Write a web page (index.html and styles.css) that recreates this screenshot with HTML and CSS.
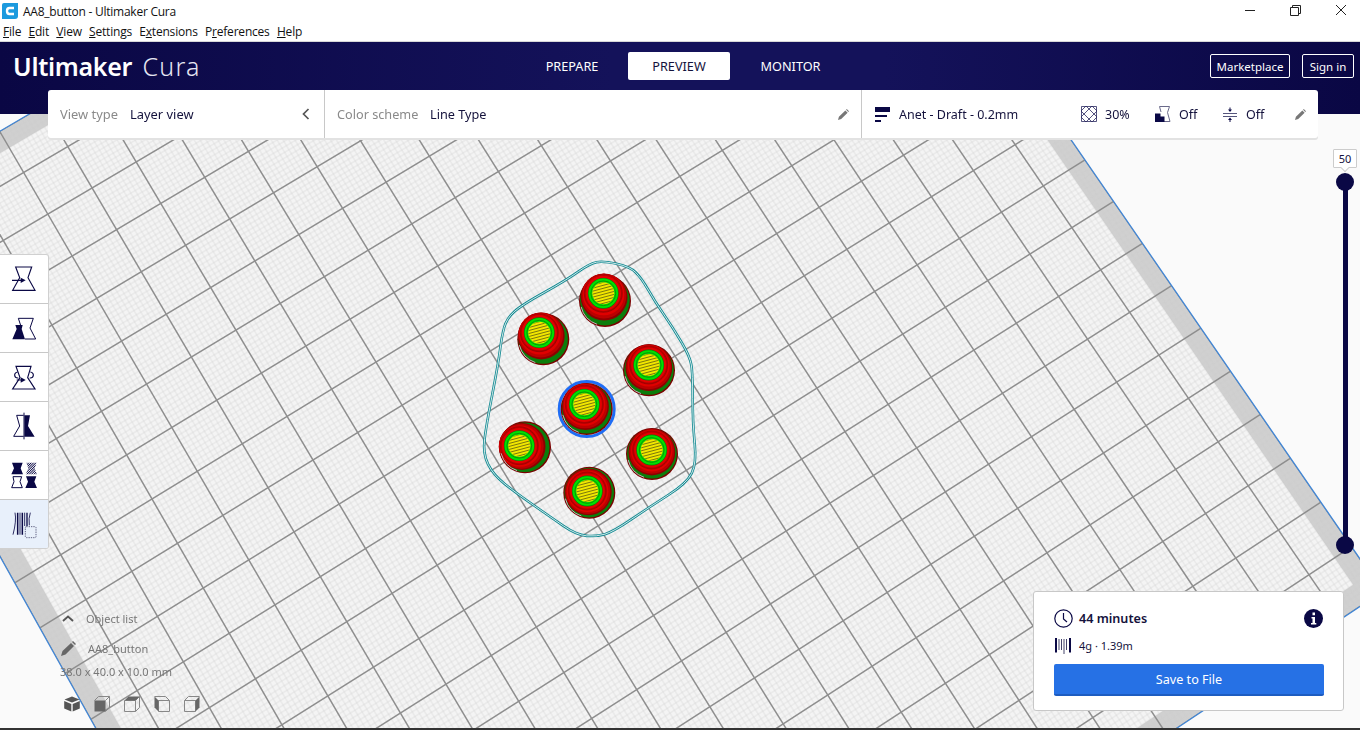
FILE: index.html
```html
<!DOCTYPE html>
<html lang="en">
<head>
<meta charset="utf-8">
<title>AA8_button - Ultimaker Cura</title>
<link rel="stylesheet" href="styles.css">
</head>
<body>
<div class="titlebar">
  <svg class="app-icon" viewBox="0 0 16 16"><path d="M2 0H16V13Q16 16 13 16H0V2Q0 0 2 0Z" fill="#1c9ade"/><path d="M12 5H7.5Q5 5 5 8Q5 11 7.5 11H12" fill="none" stroke="#fff" stroke-width="2.4"/></svg>
  <span class="window-title">AA8_button - Ultimaker Cura</span>
  <div class="window-controls">
    <svg class="win-min" viewBox="0 0 10 1"><rect width="10" height="1" fill="#222"/></svg>
    <svg class="win-restore" viewBox="0 0 11 11"><path d="M2.5 2.5V.5H10.5V8.5H8.5M.5 2.5H8.5V10.5H.5Z" fill="none" stroke="#222"/></svg>
    <svg class="win-close" viewBox="0 0 10 10"><path d="M0 0L10 10M10 0L0 10" stroke="#222" stroke-width="1"/></svg>
  </div>
</div>
<nav class="menubar">
  <span><u>F</u>ile</span><span><u>E</u>dit</span><span><u>V</u>iew</span><span><u>S</u>ettings</span><span>E<u>x</u>tensions</span><span>P<u>r</u>eferences</span><span><u>H</u>elp</span>
</nav>
<div class="app">
  <header class="header">
    <div class="logo"><b>Ultimaker</b> <i>Cura</i></div>
    <div class="tabs"><span class="tab">PREPARE</span><span class="tab tab-active">PREVIEW</span><span class="tab">MONITOR</span></div>
    <div class="account"><span class="outline-btn market">Marketplace</span><span class="outline-btn signin">Sign in</span></div>
  </header>
  <main class="viewport"><canvas id="plate" width="1360" height="614"></canvas></main>

  <section class="topbar">
    <div class="seg seg-view">
      <span class="muted lbl-view">View type</span><span class="val">Layer view</span>
      <svg class="chev" viewBox="0 0 8 12"><path d="M6.5 1L1.5 6L6.5 11" fill="none" stroke="#555" stroke-width="1.7"/></svg>
    </div>
    <div class="seg seg-color">
      <span class="muted lbl-color">Color scheme</span><span class="val">Line Type</span>
      <svg class="pencil" viewBox="0 0 12 12"><path d="M0 12L1 8.5L8 1.5L10.5 4L3.5 11ZM8.8.8L9.6 0L12 2.4L11.2 3.2Z" fill="#777"/></svg>
    </div>
    <div class="seg seg-profile">
      <svg class="ic-profile" viewBox="0 0 15 15"><path d="M0 0H15V5H0ZM0 8H12V10H0ZM0 13H6V15H0Z" fill="#0a0845"/></svg>
      <span class="val profile-name">Anet - Draft - 0.2mm</span>
      <svg class="ic-infill" viewBox="0 0 16 16"><path d="M.5.5H15.5V15.5H.5ZM0 5L5 0M0 11L11 0M5 16L16 5M11 16L16 11M0 5L11 16M0 11L5 16M5 0L16 11M11 0L16 5" fill="none" stroke="#2a2860" stroke-width=".8"/></svg>
      <span class="val pct">30%</span>
      <svg class="ic-support" viewBox="0 0 16 16"><path d="M4.5.5H14.5L12.5 6.5L15 15.5H9" fill="none" stroke="#6a6a8a" stroke-width="1"/><path d="M4.5.5L6 6" stroke="#6a6a8a" stroke-width="1"/><path d="M0 7.5H5.5V10.5H9.5V16H0Z" fill="#0a0845"/></svg>
      <span class="val off1">Off</span>
      <svg class="ic-adhesion" viewBox="0 0 14 15"><path d="M0 6.5H14M0 9.5H14" stroke="#55557c" stroke-width="1" fill="none"/><path d="M7 .5V4M7 12V15" stroke="#0a0845" stroke-width="1"/><path d="M5 2.5H9L7 5ZM5 13H9L7 10.5Z" fill="#0a0845"/></svg>
      <span class="val off2">Off</span>
      <svg class="pencil pencil-r" viewBox="0 0 12 12"><path d="M0 12L1 8.5L8 1.5L10.5 4L3.5 11ZM8.8.8L9.6 0L12 2.4L11.2 3.2Z" fill="#777"/></svg>
    </div>
  </section>

  <aside class="tools">
    <div class="tool"><svg viewBox="0 0 144 147"><g fill="none" stroke="#0a0845" stroke-width="3.5"><path d="M47 36H95L84 68L105 106H38L59 68Z"/><path d="M36 76H64"/></g><path d="M62 68L77 76L62 84Z" fill="#0a0845"/></svg></div>
    <div class="tool"><svg viewBox="0 0 144 147"><path d="M55 43H100L90 72L107 105H75" fill="none" stroke="#0a0845" stroke-width="3"/><path d="M55 43L62 64" stroke="#0a0845" stroke-width="3"/><path d="M46 63H68L65 75L75 106H37L50 75Z" fill="#0a0845"/></svg></div>
    <div class="tool"><svg viewBox="0 0 144 147"><g fill="none" stroke="#0a0845" stroke-width="3.5"><path d="M48 40H93L83 74L105 108H38L60 74Z"/><path d="M53 57A10 9 0 1 0 55 75M91 57A10 9 0 1 1 89 75M50 81H66"/></g><path d="M62 73L77 81L62 89Z" fill="#0a0845"/></svg></div>
    <div class="tool"><svg viewBox="0 0 144 147"><path d="M71 40H50L59 72L41 103H71" fill="none" stroke="#0a0845" stroke-width="3"/><path d="M73 40H90L84 72L104 104H73Z" fill="#0a0845"/><path d="M72 32V112" stroke="#0a0845" stroke-width="3"/></svg></div>
    <div class="tool"><svg viewBox="0 0 144 147"><defs><pattern id="hatch" width="5" height="5" patternUnits="userSpaceOnUse" patternTransform="rotate(45)"><rect width="2.5" height="5" fill="#0a0845"/></pattern></defs><path d="M36 35H68L62 52L69 70H34L42 52Z" fill="#0a0845"/><path d="M79 35H110L104 52L111 70H77L85 52Z" fill="url(#hatch)"/><path d="M39 77H65L60 92L67 110H35L42 92Z" fill="none" stroke="#0a0845" stroke-width="3"/><path d="M78 76H109L103 92L111 111H76L84 92Z" fill="#0a0845"/></svg></div>
    <div class="tool tool-active"><svg viewBox="0 0 144 147"><g stroke="#0a0845" fill="none"><path d="M45 38Q50 62 39 104" stroke-width="2.5"/><path d="M53 38V104" stroke-width="4.5"/><path d="M60 38V104" stroke-width="2.5"/><path d="M67 38V104" stroke-width="4.5"/><path d="M74 38V78" stroke-width="2.5"/><path d="M81 38V78" stroke-width="4"/><path d="M91 38Q85 55 88 76" stroke-width="2.5"/></g><rect x="76" y="80" width="32" height="33" rx="3" fill="#e8f0fb" stroke="#44446a" stroke-width="2.5" stroke-dasharray="4 3"/></svg></div>
  </aside>

  <div class="slider">
    <span class="slider-label">50</span>
    <div class="slider-track"><span class="knob knob-top"></span><span class="knob knob-bottom"></span></div>
  </div>

  <section class="objects">
    <div class="obj-row obj-head"><svg class="obj-chev" viewBox="0 0 12 7"><path d="M1 6L6 1.5L11 6" fill="none" stroke="#555" stroke-width="1.8"/></svg><span>Object list</span></div>
    <div class="obj-row obj-name"><svg class="obj-pencil" viewBox="0 0 15 15"><path d="M0 15L1.5 10L10 2L13 5L4.5 13.5ZM11 1L12 0L15 3L14 4Z" fill="#666"/></svg><span>AA8_button</span></div>
    <div class="obj-dim">38.0 x 40.0 x 10.0 mm</div>
    <div class="cubes">
      <svg viewBox="0 0 16 16"><path d="M8 .5L15.5 3.5L8 6.5L.5 3.5ZM.2 5L7.3 8V15.5L.2 12.5ZM15.8 5V12.5L8.7 15.5V8Z" fill="#555"/></svg>
      <svg viewBox="0 0 16 16"><path d="M.5 4.5L4.5.5H15.5V11.5L11.5 15.5M11.5 4.5L15.5.5" fill="none" stroke="#888"/><path d="M.5 4.5H11.5V15.5H.5Z" fill="#666"/></svg>
      <svg viewBox="0 0 16 16"><path d="M.5 4.5H11.5V15.5H.5ZM11.5 4.5L15.5.5V11.5L11.5 15.5" fill="none" stroke="#888"/><path d="M.5 4.5L4.5.5H15.5L11.5 4.5Z" fill="#666"/></svg>
      <svg viewBox="0 0 16 16"><path d="M4.5 4.5H15.5V15.5H4.5ZM.5.5H11.5L15.5 4.5" fill="none" stroke="#888"/><path d="M.5.5L4.5 4.5V15.5L.5 11.5Z" fill="#666"/></svg>
      <svg viewBox="0 0 16 16"><path d="M.5 4.5H11.5V15.5H.5ZM.5 4.5L4.5.5H15.5" fill="none" stroke="#888"/><path d="M11.5 4.5L15.5.5V11.5L11.5 15.5Z" fill="#666"/></svg>
    </div>
  </section>

  <section class="output">
    <div class="out-row out-time">
      <svg class="ic-clock" viewBox="0 0 19 19"><circle cx="9.5" cy="9.5" r="8.7" fill="none" stroke="#0a0845" stroke-width="1.2"/><path d="M9.5 4V10L13 13" fill="none" stroke="#0a0845" stroke-width="1.2"/></svg>
      <strong>44 minutes</strong>
      <svg class="ic-info" viewBox="0 0 19 19"><circle cx="9.5" cy="9.5" r="9.5" fill="#0a0845"/><path d="M7.5 8H11V14H12.3V15.5H7V14H8.5V9.5H7.5ZM8.5 3.5H11V6.3H8.5Z" fill="#fff"/></svg>
    </div>
    <div class="out-row out-mat">
      <svg class="ic-mat" viewBox="0 0 16 17"><path d="M1 1V15.5M15 1V15.5" stroke="#0a0845" stroke-width="2"/><path d="M4 2V13M6.5 2V13M9 2V17M11.5 2V13" stroke="#44446a" stroke-width="1"/></svg>
      <span>4g · 1.39m</span>
    </div>
    <button class="save">Save to File</button>
  </section>
</div>
<div class="statusline"></div>
<script src="plate.js"></script>
</body>
</html>
```
FILE: styles.css
```css
* { box-sizing: border-box; }
html, body { margin: 0; height: 730px; overflow: hidden; background: #fff; }
body { font-family: "Noto Sans", "Open Sans", sans-serif; color: #14123c; width: 1360px; position: relative; }

.titlebar { height: 21px; display: flex; align-items: center; padding-left: 2px; font-family: "Open Sans", sans-serif; font-size: 12px; color: #111; position: relative; }
.app-icon { width: 16px; height: 16px; margin-right: 5px; }
.window-title { letter-spacing: -.25px; position: relative; top: 1px; }
.window-controls { position: absolute; top: 0; left: 0; }
.window-controls svg { position: absolute; }
.win-min { left: 1245px; top: 10px; width: 10px; height: 1px; }
.win-restore { left: 1290px; top: 5px; width: 11px; height: 11px; }
.win-close { left: 1336px; top: 5px; width: 10px; height: 10px; }

.menubar { height: 21px; display: flex; gap: 7.3px; padding: 1px 0 0 3px; align-items: center; font-family: "Open Sans", sans-serif; font-size: 12px; color: #111; border-bottom: 1px solid #d8d8d8; letter-spacing: -.2px; }

.app { position: relative; height: 686px; }
.header { height: 72px; background: linear-gradient(90deg, #0a0744 0%, #14125a 45%, #14125a 65%, #0a0744 100%); display: flex; color: #fff; position: relative; }
.logo { position: absolute; left: 13px; top: 6px; font-size: 25px; line-height: 36px; white-space: nowrap; }
.logo b { font-weight: 600; letter-spacing: -.3px; }
.logo i { font-style: normal; font-weight: 300; margin-left: 4px; color: #e6e6f2; letter-spacing: 1.2px; }
.tabs { position: absolute; left: 516px; top: 10px; display: flex; }
.tab { width: 112px; height: 28px; display: flex; align-items: center; justify-content: center; font-size: 12.7px; }
.tab-active { width: 102px; background: #fff; color: #14123c; border-radius: 2px; }
.tab:last-child { width: 121px; }
.account { position: absolute; left: 1210px; top: 12px; display: flex; gap: 12px; }
.outline-btn { height: 24px; border: 1px solid #fff; border-radius: 2px; display: flex; align-items: center; justify-content: center; font-size: 11.5px; }
.market { width: 80px; }
.signin { width: 52px; }

.viewport { height: 614px; background: #fafafa; overflow: hidden; }
#plate { display: block; }

.topbar { position: absolute; left: 48px; top: 48px; width: 1270px; height: 48px; background: #fff; border-radius: 3px; display: flex; box-shadow: 0 2px 0 #e2e2e2; font-size: 12.5px; }
.seg { height: 48px; display: flex; align-items: center; position: relative; }
.seg-view { width: 277px; padding-left: 12px; border-right: 1px solid #c8c8c8; font-size: 12.9px; }
.seg-color { width: 537px; padding-left: 12px; border-right: 1px solid #c8c8c8; font-size: 12.7px; }
.seg-profile { flex: 1; padding-left: 13px; }
.muted { color: #8a8a8a; }
.lbl-view { width: 70px; }
.lbl-color { width: 93px; }
.val { color: #14123c; white-space: nowrap; }
.chev { position: absolute; left: 254px; top: 18px; width: 8px; height: 12px; }
.pencil { position: absolute; left: 513px; top: 19px; width: 11px; height: 11px; }
.pencil-r { left: 433px; }
.ic-profile { width: 15px; height: 15px; margin-right: 9px; }
.profile-name { width: 182px; }
.ic-infill { width: 16px; height: 16px; margin-right: 8px; }
.pct { width: 50px; }
.ic-support { width: 16px; height: 16px; margin-right: 8px; }
.off1 { width: 44px; }
.ic-adhesion { width: 14px; height: 15px; margin-right: 9px; }

.tools { position: absolute; left: 0; top: 212px; width: 49px; background: #fff; border: 1px solid #d0d0d0; border-left: 0; border-radius: 0 3px 3px 0; overflow: hidden; }
.tool { height: 49px; border-bottom: 1px solid #c8c8c8; }
.tool:last-child { height: 48px; border-bottom: 0; }
.tool svg { display: block; width: 48px; height: 49px; }
.tool-active { background: #e8f0fb; }

.slider { position: absolute; left: 1332px; top: 107px; width: 26px; display: flex; flex-direction: column; align-items: center; }
.slider-label { width: 24px; height: 19px; background: #fff; border: 1px solid #ccc; font-size: 11px; line-height: 17px; text-align: center; position: relative; border-radius: 1px; }
.slider-label::after { content: ""; position: absolute; left: 8px; top: 15px; width: 5px; height: 5px; background: #fff; border-right: 1px solid #ccc; border-bottom: 1px solid #ccc; transform: rotate(45deg); }
.slider-track { width: 5px; height: 363px; margin-top: 14px; background: #0a0845; position: relative; }
.knob { position: absolute; left: -6.5px; width: 18px; height: 18px; border-radius: 50%; background: #0a0845; }
.knob-top { top: -9px; }
.knob-bottom { bottom: -9px; }

.objects { position: absolute; left: 60px; top: 568px; width: 160px; color: #777; font-size: 11px; }
.obj-row { display: flex; align-items: center; height: 18px; }
.obj-chev { width: 12px; height: 7px; margin: 0 12px 0 2px; }
.obj-head { margin-top: -1px; }
.obj-name { margin-top: 12px; }
.obj-pencil { width: 15px; height: 15px; margin-right: 12px; margin-left: 1px; }
.obj-dim { margin-top: 7px; line-height: 16px; }
.cubes { display: flex; gap: 14px; margin-top: 16px; margin-left: 4px; }
.cubes svg { width: 16px; height: 16px; }

.output { position: absolute; left: 1033px; top: 549px; width: 311px; height: 120px; background: #fff; border: 1px solid #c8c8c8; border-radius: 3px; padding: 15px 20px 0; }
.out-row { display: flex; align-items: center; }
.out-time { height: 22px; }
.ic-clock { width: 19px; height: 19px; margin-right: 6px; }
.out-time strong { font-size: 12.6px; font-weight: 600; flex: 1; }
.ic-info { width: 19px; height: 19px; }
.out-mat { margin-top: 7px; height: 18px; font-size: 11px; }
.ic-mat { width: 16px; height: 17px; margin: 0 8px 0 1px; }
.save { display: block; width: 270px; height: 32px; margin-top: 10px; border: 0; border-bottom: 2px solid #1d5cc0; border-radius: 2px; background: #2671e5; color: #fff; font: 12.6px "Noto Sans", sans-serif; padding: 0; }

.statusline { height: 2px; background: #333; position: absolute; left: 0; right: 0; top: 728px; }
```
FILE: plate.js
```js
// Perspective build plate and layer-view prints, drawn on a canvas.
var OFFSET_Y = 114; // canvas starts below the header
var ctx = document.getElementById('plate').getContext('2d');
ctx.translate(0, -OFFSET_Y);

// Grid crossings [i, j, x, y]: lattice cell index -> screen position
var crossings = [
  [0,0,68.3,146.7],[-1,0,23.3,171.7],[0,1,91.7,188.3],[1,1,136.7,161.7],[-1,1,47.7,214.3],[0,2,116.7,230],[1,2,161,204.3],
  [-4,8,85,601.7],[-3,9,158.3,616.7],[-3,10,183.3,661.7],[-2,10,230,633.3],[-4,10,136.7,690],[-3,11,210,706.7],
  [12,17,1047.3,552.3],[13,17,1090,525],[13,18,1120,568.3],[14,18,1163.3,541.7],[14,19,1193.3,588.3],[15,19,1235,557.3],[16,19,1278.3,530.7],
  [13,9,862,181],[14,9,904.4,155],[15,10,974,171.7],[16,10,1014.6,145],
  [7,9,605,338.3],[8,9,645,311.7],[6,7,508.3,281.7],[7,7,550,255]
];

function solve(A, b) {
  var n = b.length, r, c, k;
  for (c = 0; c < n; c++) {
    var piv = c;
    for (r = c + 1; r < n; r++) if (Math.abs(A[r][c]) > Math.abs(A[piv][c])) piv = r;
    var t = A[c]; A[c] = A[piv]; A[piv] = t; t = b[c]; b[c] = b[piv]; b[piv] = t;
    for (r = c + 1; r < n; r++) {
      var f = A[r][c] / A[c][c];
      for (k = c; k < n; k++) A[r][k] -= f * A[c][k];
      b[r] -= f * b[c];
    }
  }
  var x = new Array(n);
  for (r = n - 1; r >= 0; r--) {
    var s = b[r];
    for (k = r + 1; k < n; k++) s -= A[r][k] * x[k];
    x[r] = s / A[r][r];
  }
  return x;
}
function fitHomography(pts) {
  var N = [], v = [], a, b;
  for (a = 0; a < 8; a++) { N.push([0,0,0,0,0,0,0,0]); v.push(0); }
  function add(row, rhs) {
    for (a = 0; a < 8; a++) { v[a] += row[a] * rhs; for (b = 0; b < 8; b++) N[a][b] += row[a] * row[b]; }
  }
  pts.forEach(function (p) {
    var u = p[0] / 10, w = p[1] / 10, x = p[2] / 500, y = p[3] / 500;
    add([u, w, 1, 0, 0, 0, -u * x, -w * x], x);
    add([0, 0, 0, u, w, 1, -u * y, -w * y], y);
  });
  var h = solve(N, v);
  return function (i, j) {
    var u = i / 10, w = j / 10, d = h[6] * u + h[7] * w + 1;
    return [500 * (h[0] * u + h[1] * w + h[2]) / d, 500 * (h[3] * u + h[4] * w + h[5]) / d];
  };
}
var P = fitHomography(crossings);

var I0 = -5, I1 = 17, J0 = -1, J1 = 21, BAND = 0.4;

function line(a, b) { ctx.beginPath(); ctx.moveTo(a[0], a[1]); ctx.lineTo(b[0], b[1]); ctx.stroke(); }
function rectPath(i0, j0, i1, j1, reverse) {
  var c = [P(i0, j0), P(i1, j0), P(i1, j1), P(i0, j1)];
  if (reverse) c.reverse();
  c.forEach(function (p, k) { k ? ctx.lineTo(p[0], p[1]) : ctx.moveTo(p[0], p[1]); });
  ctx.closePath();
}

ctx.fillStyle = '#fafafa';
ctx.fillRect(0, 0, 1360, 800);

// plate
ctx.beginPath(); rectPath(I0, J0, I1, J1);
ctx.fillStyle = '#f4f4f4'; ctx.fill();
ctx.save(); ctx.clip();
// border band (no-go zone)
ctx.beginPath(); rectPath(I0, J0, I1, J1); rectPath(I0 + BAND, J0 + BAND, I1 - BAND, J1 - BAND, true);
ctx.fillStyle = '#d0d0d0'; ctx.fill();
// minor grid, 1/10 of a cell
ctx.strokeStyle = 'rgba(205,205,205,.24)'; ctx.lineWidth = 1.6;
var n;
for (n = I0 * 10; n <= I1 * 10; n++) if (n % 10) line(P(n / 10, J0), P(n / 10, J1));
for (n = J0 * 10; n <= J1 * 10; n++) if (n % 10) line(P(I0, n / 10), P(I1, n / 10));
// major grid
ctx.strokeStyle = '#8e8e8e'; ctx.lineWidth = 1.5;
for (n = I0; n <= I1; n++) line(P(n, J0), P(n, J1));
for (n = J0; n <= J1; n++) line(P(I0, n), P(I1, n));
ctx.restore();
// plate edge
ctx.beginPath(); rectPath(I0, J0, I1, J1);
ctx.strokeStyle = '#3f86d8'; ctx.lineWidth = 1.2; ctx.stroke();

// skirt outline, traced from the preview
var skirt = [[400,33],[480,50],[515,85],[555,155],[610,235],[660,320],[668,370],[668,520],[680,640],[650,700],[540,770],[430,845],[380,860],[320,855],[240,800],[140,730],[70,675],[38,610],[50,520],[85,340],[95,260],[110,205],[155,165],[290,90],[360,40]]
  .map(function (p) { return [p[0] / 3 + 470, p[1] / 3 + 250]; });
function skirtPath() {
  ctx.beginPath();
  var n = skirt.length;
  var s = [(skirt[n-1][0] + skirt[0][0]) / 2, (skirt[n-1][1] + skirt[0][1]) / 2];
  ctx.moveTo(s[0], s[1]);
  for (var i = 0; i < n; i++) {
    var a = skirt[i], b = skirt[(i + 1) % n];
    ctx.quadraticCurveTo(a[0], a[1], (a[0] + b[0]) / 2, (a[1] + b[1]) / 2);
  }
  ctx.closePath();
}
skirtPath(); ctx.strokeStyle = '#138a92'; ctx.lineWidth = 2.6; ctx.stroke();
skirtPath(); ctx.strokeStyle = '#e8f4f4'; ctx.lineWidth = .9; ctx.stroke();

// prints: top = position of top layer, base = base of the print
var prints = [
  { top: [603.3, 293.3], base: [605, 301] },
  { top: [539.3, 332.7], base: [543.3, 339.3] },
  { top: [648.7, 365], base: [649, 370.3] },
  { top: [584.3, 404.3], base: [586.7, 409], selected: true },
  { top: [519.3, 445.7], base: [525, 447.3] },
  { top: [651.7, 450], base: [652, 454] },
  { top: [587.3, 491], base: [589.3, 492.7] }
];
var layers = [
  [26, 0, '#7a0000'], [24.8, .05, '#0b7d0b'], [23.4, .5, '#8e0000'], [22.4, .65, '#bc0000'],
  [20.8, .85, '#e00000'], [18.6, .96, '#b40000'], [17.6, 1, '#e40000']
];
function disc(c, r, col) { ctx.beginPath(); ctx.arc(c[0], c[1], r, 0, Math.PI * 2); ctx.fillStyle = col; ctx.fill(); }
function ring(c, r, col, w) { ctx.beginPath(); ctx.arc(c[0], c[1], r, 0, Math.PI * 2); ctx.strokeStyle = col; ctx.lineWidth = w; ctx.stroke(); }

prints.forEach(function (m) {
  if (m.selected) ring(m.base, 27.5, '#1f6df5', 3);
  layers.forEach(function (l) {
    var t = l[1];
    disc([m.base[0] + (m.top[0] - m.base[0]) * t, m.base[1] + (m.top[1] - m.base[1]) * t], l[0], l[2]);
  });
  ctx.beginPath(); ctx.arc(m.base[0], m.base[1], 24.6, 1.9, 2.9); ctx.strokeStyle = '#b8b8b8'; ctx.lineWidth = 1; ctx.stroke();
  ring(m.top, 19, 'rgba(90,0,0,.5)', .8);
  disc(m.top, 15.4, '#0a7a0a');
  disc(m.top, 14.8, '#00e000');
  ring(m.top, 12.4, '#0a8a0a', .9);
  disc(m.top, 11, '#f2e600');
  ctx.save();
  ctx.beginPath(); ctx.arc(m.top[0], m.top[1], 10.8, 0, Math.PI * 2); ctx.clip();
  ctx.strokeStyle = '#5a5a10'; ctx.lineWidth = .8;
  for (var k = -14; k <= 14; k += 3) {
    line([m.top[0] - 13, m.top[1] + k + 3.5], [m.top[0] + 13, m.top[1] + k - 3.5]);
  }
  ctx.restore();
});
```
